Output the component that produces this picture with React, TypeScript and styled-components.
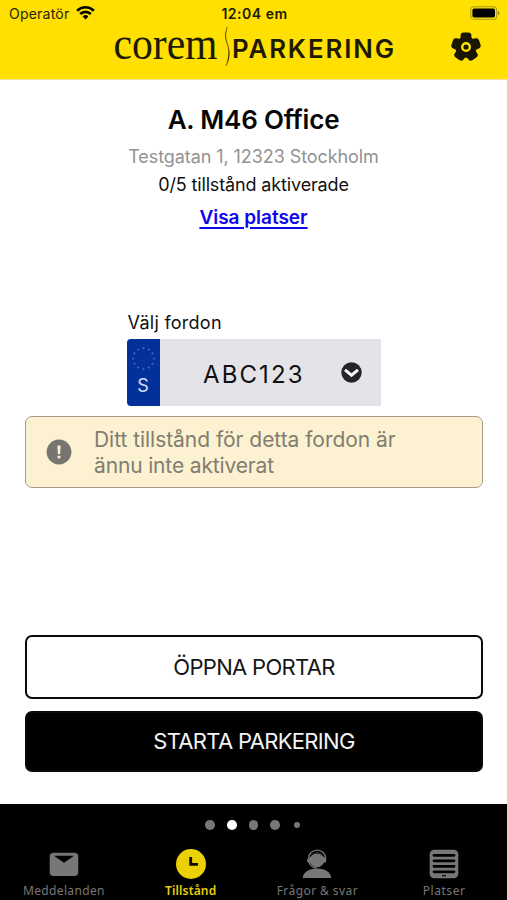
import React from 'react';
import styled, { createGlobalStyle } from 'styled-components';

const GlobalStyle = createGlobalStyle`
  * { box-sizing: border-box; }
  body { margin: 0; background: #fff; font-family: Inter, "Liberation Sans", sans-serif; color: #111; }
  button, a { font-family: inherit; }
  svg { display: block; overflow: visible; }
`;

const Screen = styled.main`
  width: 507px;
  height: 900px;
  display: flex;
  flex-direction: column;
  overflow: hidden;
`;

const Header = styled.header`
  height: 80px;
  flex: none;
  background: #ffe000;
  border-bottom: 1px solid #eee3a0;
`;

const StatusBar = styled.div`
  height: 27px;
  padding: 0 7px 0 9px;
  display: grid;
  grid-template-columns: 1fr auto 1fr;
  align-items: center;
  font-size: 14px;
  line-height: 27px;
  color: #29250a;
`;

const Carrier = styled.div`
  display: flex;
  align-items: center;
  gap: 7px;
  letter-spacing: 0.22px;

  svg { margin-top: -2px; }
`;

const Clock = styled.div`
  font-weight: 600;
  letter-spacing: 0.5px;
  color: #1d1a04;
`;

const Battery = styled.div`
  display: flex;
  justify-content: flex-end;
  margin-top: -1px;
`;

const Brand = styled.div`
  height: 44px;
  display: grid;
  grid-template-columns: 1fr 282px 1fr;
  align-items: start;
  color: #1d1a04;
`;

const BrandSide = styled.div`
  padding: 5px 0 0 56px;
`;

const Info = styled.section`
  display: flex;
  flex-direction: column;
  align-items: center;
  padding-top: 22px;
  height: 232px;
  flex: none;
`;

const Title = styled.h1`
  margin: 0;
  font-size: 26px;
  line-height: 36px;
  font-weight: 600;
  letter-spacing: -0.2px;
  color: #060606;
`;

const Address = styled.p`
  margin: 5px 0 0;
  font-size: 18px;
  line-height: 28px;
  letter-spacing: -0.08px;
  color: #929292;
`;

const Count = styled.p`
  margin: 0;
  font-size: 18px;
  line-height: 28px;
  letter-spacing: -0.14px;
`;

const PlacesLink = styled.a`
  margin-top: 5px;
  font-size: 19px;
  line-height: 28px;
  font-weight: 600;
  letter-spacing: -0.02px;
  color: #0f06ee;
  text-decoration: underline;
  text-decoration-thickness: 1.5px;
  text-underline-offset: 2.5px;
`;

const Vehicle = styled.section`
  width: 254px;
  margin: 0 auto;
  flex: none;
`;

const VehicleLabel = styled.div`
  height: 27px;
  padding-left: 1px;
  font-size: 18px;
  line-height: 21px;
  letter-spacing: 0.26px;
`;

const Plate = styled.div`
  height: 67px;
  display: flex;
  background: #e4e3e8;
  border-radius: 4px 0 0 4px;
  overflow: hidden;
`;

const PlateBand = styled.div`
  width: 33px;
  display: flex;
  flex-direction: column;
  align-items: center;
  padding-top: 6px;
  background: #04309a;
  color: #d5dff5;
  font-size: 18px;
  line-height: 27px;
`;

const PlateNumber = styled.div`
  flex: 1;
  padding-left: 43.5px;
  font-size: 24px;
  line-height: 72px;
  letter-spacing: 2.1px;
`;

const PlateToggle = styled.div`
  width: 40px;
  padding-top: 23px;
`;

const Notice = styled.section`
  height: 72px;
  margin: 10px 24px 0 25px;
  display: flex;
  align-items: center;
  padding: 0 20px 0 20px;
  gap: 22px;
  border: 1.5px solid #a39c8a;
  border-radius: 7px;
  background: #fcf1d0;
  flex: none;
`;

const NoticeText = styled.p`
  margin: 1px 0 0;
  font-size: 21px;
  line-height: 26px;
  letter-spacing: -0.05px;
  color: #827d73;
`;

const NoticeLine = styled.span<{ $tight?: boolean }>`
  display: block;
  letter-spacing: ${p => (p.$tight ? -0.15 : -0.04)}px;
`;

const Actions = styled.section`
  margin: 147px 24px 0 25px;
  display: flex;
  flex-direction: column;
  gap: 12px;
  flex: none;
`;

const ActionButton = styled.button<{ $filled?: boolean }>`
  height: ${p => (p.$filled ? 61 : 63.5)}px;
  padding: 0;
  border: 2.5px solid #0a0a0a;
  border-radius: 7px;
  background: ${p => (p.$filled ? '#000' : '#fff')};
  color: ${p => (p.$filled ? '#f4f4f4' : '#161616')};
  font-size: 22px;
  letter-spacing: -0.68px;
`;

const Footer = styled.footer`
  margin-top: auto;
  height: 96px;
  flex: none;
  background: #000;
`;

const Pager = styled.div`
  height: 42px;
  display: flex;
  align-items: center;
  justify-content: center;
  gap: 12px;
`;

const Dot = styled.span<{ $active?: boolean; $small?: boolean }>`
  width: ${p => (p.$small ? 6 : 9.6)}px;
  height: ${p => (p.$small ? 6 : 9.6)}px;
  margin: ${p => (p.$small ? '0 2px' : '0')};
  border-radius: 50%;
  background: ${p => (p.$active ? '#fff' : '#777')};
`;

const Tabs = styled.nav`
  display: grid;
  grid-template-columns: repeat(4, 1fr);
`;

const Tab = styled.div<{ $active?: boolean }>`
  display: flex;
  flex-direction: column;
  align-items: center;
  padding-left: 1px;
  color: ${p => (p.$active ? '#e9ce05' : '#777')};
  font-weight: ${p => (p.$active ? 600 : 400)};
`;

const TabIcon = styled.div`
  height: 35px;
  display: flex;
  align-items: center;
`;

const TabLabel = styled.span<{ $spacing: number }>`
  font-family: "Noto Sans", "Open Sans", sans-serif;
  font-size: 12px;
  line-height: 20px;
  letter-spacing: ${p => p.$spacing}px;
`;

const WifiIcon = () => (
  <svg width="19" height="14" viewBox="0 0 19 14" fill="none" stroke="#050500" strokeWidth="2.6">
    <path d="M1.1 4.7a12 12 0 0 1 16.8 0" />
    <path d="M4.2 8a7.6 7.6 0 0 1 10.6 0" />
    <path d="M9.5 13.4 6.6 10.5a4.1 4.1 0 0 1 5.8 0Z" fill="#050500" stroke="none" />
  </svg>
);

const BatteryIcon = () => (
  <svg width="30" height="14" viewBox="0 0 30 14">
    <rect x=".7" y=".7" width="26" height="12.6" rx="3.4" fill="none" stroke="#a69a1c" strokeWidth="1.1" />
    <rect x="2.4" y="2.4" width="22.6" height="9.2" rx="1.8" fill="#000" />
    <path d="M28 4.8c2 .8 2 3.6 0 4.4Z" fill="#8e8418" />
  </svg>
);

const BrandLogo = () => (
  <svg width="282" height="44" viewBox="0 0 282 44" fill="#1d1a04" role="img" aria-label="corem parkering">
    <text x="0.5" y="31.5" fontFamily="Liberation Serif" fontSize="46" textLength="104" lengthAdjust="spacingAndGlyphs">corem</text>
    <path d="M114.2 0c-2.600 7-2 12 .2 17.500s1.600 14-1.400 21.500c4-7 4.100-14.500 1.900-20.500s-2.900-11-.7-18.500Z" stroke="#1d1a04" strokeWidth=".3" />
    <text x="119" y="31.300" fontFamily="Inter" fontWeight="600" fontSize="25.800" textLength="162" lengthAdjust="spacing">PARKERING</text>
  </svg>
);

const PETALS = [0, 72, 144, 216, 288];

const FlowerIcon = () => (
  <svg width="30" height="30" viewBox="0 0 30 30" fill="#1a1700">
    {PETALS.map(angle => (
      <rect key={angle} x="9.600" y="0.500" width="10.800" height="14" rx="3.200" transform={`rotate(${angle} 15 15)`} />
    ))}
    <circle cx="15" cy="15" r="10.700" />
    <circle cx="15" cy="15" r="3.800" fill="none" stroke="#ffe000" strokeWidth="2.400" />
  </svg>
);

const STAR = 'M0-1.500.4-.5 1.500-.5.6.200.9 1.300 0 .600-.9 1.300-.6.200-1.500-.5-.4-.5Z';

const EuStars = () => (
  <svg width="27" height="27" viewBox="-13.500 -13.500 27 27" fill="#4f76a8">
    {Array.from({ length: 12 }, (_, i) => {
      const a = (i * Math.PI) / 6;
      return <path key={i} d={STAR} transform={`translate(${10.4 * Math.sin(a)} ${-10.4 * Math.cos(a)})`} />;
    })}
  </svg>
);

const ChevronIcon = () => (
  <svg width="21" height="21" viewBox="0 0 21 21">
    <circle cx="10.500" cy="10.500" r="10.200" fill="#242529" />
    <path d="m4 7.800 6.500 5.400 6.500-5.400" fill="none" stroke="#f4f4f6" strokeWidth="3" />
  </svg>
);

const AlertIcon = () => (
  <svg width="26" height="26" viewBox="0 0 26 26">
    <circle cx="13" cy="13" r="12.400" fill="#777572" />
    <path d="M11.400 6.500h3.200l-.5 8.500h-2.200Z" fill="#fcf1d0" />
    <circle cx="13" cy="18" r="1.600" fill="#fcf1d0" />
  </svg>
);

const MailIcon = () => (
  <svg width="30" height="30" viewBox="0 0 30 30">
    <rect x=".7" y="3.700" width="28.600" height="23.300" rx="4" fill="#777" />
    <path d="M5 6.700h20l-10 7Z" fill="#000" />
  </svg>
);

const ClockIcon = () => (
  <svg width="30" height="30" viewBox="0 0 30 30">
    <circle cx="15" cy="15" r="15" fill="#ebd004" />
    <path d="M14.700 8v7.300H22" fill="none" stroke="#0c0b00" strokeWidth="2.800" />
  </svg>
);

const AgentIcon = () => (
  <svg width="30" height="30" viewBox="0 0 30 30" fill="#777">
    <path d="M.8 29c0-5.500 6-9.500 14.200-9.500s14.200 4 14.200 9.500Z" />
    <circle cx="15" cy="10.800" r="7.400" />
    <path d="M6.600 12.500V9.200a8.500 8 0 0 1 17 0v3" fill="none" stroke="#777" strokeWidth="1.300" />
    <path d="M6.500 9 4.700 11.500l2 2.800 2-.3V9ZM22 8.500h2v5h-2Z" />
    <path d="M8.500 7.600c2.500-4.400 10-4.600 13 0" fill="none" stroke="#000" strokeWidth=".8" />
    <path d="M7.300 14c1.500 3.500 4 4.800 7.500 5.200" fill="none" stroke="#777" strokeWidth="1.200" />
  </svg>
);

const ListIcon = () => (
  <svg width="30" height="30" viewBox="0 0 30 30">
    <rect x=".7" y=".7" width="28.600" height="28.600" rx="4.500" fill="#777" />
    <path d="M5 6.300h20M5 11.800h20M5 17.300h20M5 22.800h20" stroke="#000" strokeWidth="2.800" strokeLinecap="round" />
    <path d="M13 26.700h4" stroke="#000" strokeWidth="1.200" />
  </svg>
);

const TABS = [
  { label: 'Meddelanden', icon: <MailIcon />, spacing: 0.35 },
  { label: 'Tillstånd', icon: <ClockIcon />, spacing: 0.15, active: true },
  { label: 'Frågor & svar', icon: <AgentIcon />, spacing: 0.42 },
  { label: 'Platser', icon: <ListIcon />, spacing: 0.55 },
];

export default function App() {
  return (
    <Screen>
      <GlobalStyle />
      <Header>
        <StatusBar>
          <Carrier>Operatör<WifiIcon /></Carrier>
          <Clock>12:04 em</Clock>
          <Battery><BatteryIcon /></Battery>
        </StatusBar>
        <Brand>
          <span />
          <BrandLogo />
          <BrandSide><FlowerIcon /></BrandSide>
        </Brand>
      </Header>
      <Info>
        <Title>A. M46 Office</Title>
        <Address>Testgatan 1, 12323 Stockholm</Address>
        <Count>0/5 tillstånd aktiverade</Count>
        <PlacesLink href="#">Visa platser</PlacesLink>
      </Info>
      <Vehicle>
        <VehicleLabel>Välj fordon</VehicleLabel>
        <Plate>
          <PlateBand><EuStars />S</PlateBand>
          <PlateNumber>ABC123</PlateNumber>
          <PlateToggle><ChevronIcon /></PlateToggle>
        </Plate>
      </Vehicle>
      <Notice>
        <AlertIcon />
        <NoticeText>
          <NoticeLine>Ditt tillstånd för detta fordon är</NoticeLine>
          <NoticeLine $tight>ännu inte aktiverat</NoticeLine>
        </NoticeText>
      </Notice>
      <Actions>
        <ActionButton>ÖPPNA PORTAR</ActionButton>
        <ActionButton $filled>STARTA PARKERING</ActionButton>
      </Actions>
      <Footer>
        <Pager>
          <Dot />
          <Dot $active />
          <Dot />
          <Dot />
          <Dot $small />
        </Pager>
        <Tabs>
          {TABS.map(t => (
            <Tab key={t.label} $active={t.active}>
              <TabIcon>{t.icon}</TabIcon>
              <TabLabel $spacing={t.spacing}>{t.label}</TabLabel>
            </Tab>
          ))}
        </Tabs>
      </Footer>
    </Screen>
  );
}
